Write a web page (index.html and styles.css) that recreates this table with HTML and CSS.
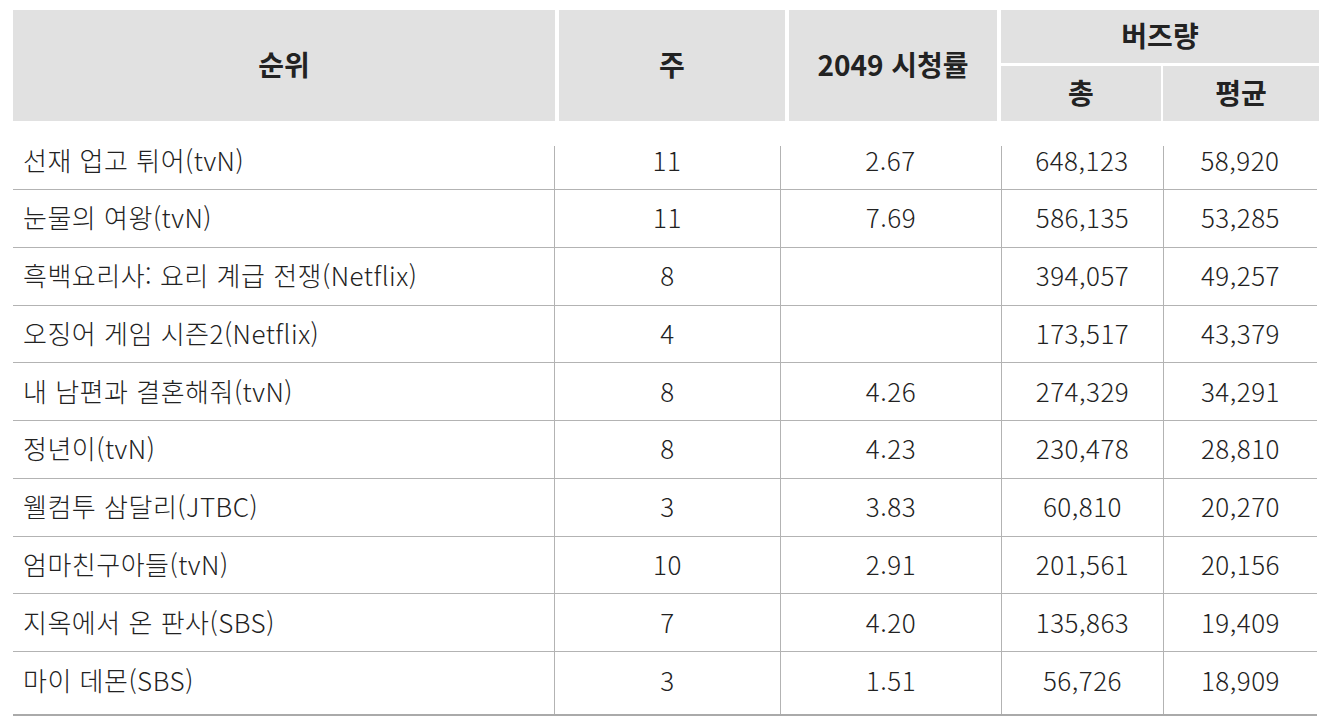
FILE: index.html
```html
<!DOCTYPE html>
<html lang="ko">
<head>
<meta charset="utf-8">
<link rel="stylesheet" href="styles.css">
</head>
<body>
<div class="table">
  <div class="thead">
    <div class="th span2">순위</div>
    <div class="th span2">주</div>
    <div class="th span2">2049 시청률</div>
    <div class="th buzz">버즈량</div>
    <div class="sub">
      <div class="th">총</div>
      <div class="th">평균</div>
    </div>
  </div>
  <div class="tbody">
    <div class="tr first"><div class="td name">선재 업고 튀어(tvN)</div><div class="td">11</div><div class="td">2.67</div><div class="td">648,123</div><div class="td">58,920</div></div>
    <div class="tr"><div class="td name">눈물의 여왕(tvN)</div><div class="td">11</div><div class="td">7.69</div><div class="td">586,135</div><div class="td">53,285</div></div>
    <div class="tr"><div class="td name">흑백요리사: 요리 계급 전쟁(Netflix)</div><div class="td">8</div><div class="td"></div><div class="td">394,057</div><div class="td">49,257</div></div>
    <div class="tr"><div class="td name">오징어 게임 시즌2(Netflix)</div><div class="td">4</div><div class="td"></div><div class="td">173,517</div><div class="td">43,379</div></div>
    <div class="tr"><div class="td name">내 남편과 결혼해줘(tvN)</div><div class="td">8</div><div class="td">4.26</div><div class="td">274,329</div><div class="td">34,291</div></div>
    <div class="tr"><div class="td name">정년이(tvN)</div><div class="td">8</div><div class="td">4.23</div><div class="td">230,478</div><div class="td">28,810</div></div>
    <div class="tr"><div class="td name">웰컴투 삼달리(JTBC)</div><div class="td">3</div><div class="td">3.83</div><div class="td">60,810</div><div class="td">20,270</div></div>
    <div class="tr"><div class="td name">엄마친구아들(tvN)</div><div class="td">10</div><div class="td">2.91</div><div class="td">201,561</div><div class="td">20,156</div></div>
    <div class="tr"><div class="td name">지옥에서 온 판사(SBS)</div><div class="td">7</div><div class="td">4.20</div><div class="td">135,863</div><div class="td">19,409</div></div>
    <div class="tr last"><div class="td name">마이 데몬(SBS)</div><div class="td">3</div><div class="td">1.51</div><div class="td">56,726</div><div class="td">18,909</div></div>
  </div>
</div>
</body>
</html>
```

FILE: styles.css
```css
html, body {
  margin: 0;
  padding: 0;
  background: #ffffff;
}
body {
  font-family: "Noto Sans CJK KR", "Noto Sans", sans-serif;
  color: #222222;
}
.table {
  padding: 10px 0 0 13px;
  width: 1306px;
}
.thead {
  display: grid;
  grid-template-columns: 542px 226px 208px 318px;
  grid-template-rows: 53px 55px;
  column-gap: 4px;
  row-gap: 3px;
  width: 1306px;
}
.th {
  background: #e1e1e1;
  display: flex;
  align-items: center;
  justify-content: center;
  font-size: 28px;
  font-weight: 700;
  color: #222222;
  padding-bottom: 3px;
  box-sizing: border-box;
}
.span2 {
  grid-row: 1 / span 2;
}
.buzz {
  grid-column: 4;
  grid-row: 1;
}
.sub {
  grid-column: 4;
  grid-row: 2;
  display: grid;
  grid-template-columns: 160px 156px;
  column-gap: 2px;
}
.tbody {
  margin-top: 11px;
  width: 1304px;
}
.tr {
  display: grid;
  grid-template-columns: 541px 226px 221px 162px 154px;
  height: 57.75px;
  box-sizing: border-box;
  border-bottom: 1px solid #b3b3b3;
}
.tr.first {
  height: 58px;
}
.tr.last {
  height: 63.5px;
  border-bottom: 2px solid #aaaaaa;
}
.td {
  display: flex;
  align-items: center;
  justify-content: center;
  font-size: 26px;
  font-weight: 300;
  letter-spacing: 0.5px;
  color: #222222;
  border-left: 1px solid #b3b3b3;
  padding-bottom: 3px;
  box-sizing: border-box;
}
.tr.last .td {
  padding-bottom: 6px;
}
.td.name {
  justify-content: flex-start;
  padding-left: 10px;
  border-left: none;
}
.tr.first .td {
  border-left: none;
  background: linear-gradient(#b3b3b3, #b3b3b3) left 14px / 1px calc(100% - 14px) no-repeat;
}
.tr.first .td.name {
  background: none;
}
```
